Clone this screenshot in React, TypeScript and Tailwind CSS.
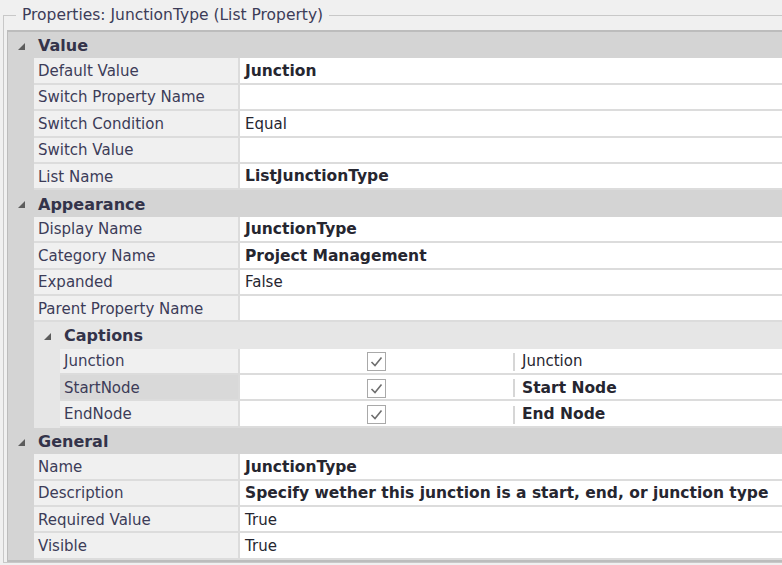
import React from "react";

type Item = { name: string; value: string; bold?: boolean };

const valueItems: Item[] = [
  { name: "Default Value", value: "Junction", bold: true },
  { name: "Switch Property Name", value: "" },
  { name: "Switch Condition", value: "Equal" },
  { name: "Switch Value", value: "" },
  { name: "List Name", value: "ListJunctionType", bold: true },
];

const appearanceItems: Item[] = [
  { name: "Display Name", value: "JunctionType", bold: true },
  { name: "Category Name", value: "Project Management", bold: true },
  { name: "Expanded", value: "False" },
  { name: "Parent Property Name", value: "" },
];

const captions = [
  { name: "Junction", caption: "Junction", bold: false },
  { name: "StartNode", caption: "Start Node", bold: true, selected: true },
  { name: "EndNode", caption: "End Node", bold: true },
];

const generalItems: Item[] = [
  { name: "Name", value: "JunctionType", bold: true },
  {
    name: "Description",
    value: "Specify wether this junction is a start, end, or junction type",
    bold: true,
  },
  { name: "Required Value", value: "True" },
  { name: "Visible", value: "True" },
];

const Arrow = () => (
  <svg width="7" height="7" viewBox="0 0 7 7">
    <polygon points="7,0 7,7 0,7" fill="#5c5c5c" />
  </svg>
);

const Check = () => (
  <div className="w-[19px] h-[19px] mt-[2px] border border-[#a9a9a9] bg-white flex items-center justify-center">
    <svg width="15" height="15" viewBox="0 0 15 15">
      <path d="M2.5 8 L6 11.5 L12.5 3.5" fill="none" stroke="#6e6e6e" strokeWidth="1.6" />
    </svg>
  </div>
);

const Category = ({ title }: { title: string }) => (
  <div className="flex h-[26.4px] bg-[#d4d4d4]">
    <div className="w-[26px] flex items-center justify-center pt-[2px]">
      <Arrow />
    </div>
    <div className="pl-[4px] pt-[2px] flex items-center font-bold text-[16px] text-[#33334a]">{title}</div>
  </div>
);

const Gutter = () => <div className="w-[26px] shrink-0 bg-[#d4d4d4]" />;

const PropRow = ({ item }: { item: Item }) => (
  <div className="flex h-[26.4px]">
    <Gutter />
    <div className="flex flex-1 border-b-2 border-[#dcdcdc]">
      <div className="w-[206px] shrink-0 bg-[#f0f0f0] border-r-2 border-[#dcdcdc] pl-[4px] pt-[2px] flex items-center text-[#3c3c58]">
        {item.name}
      </div>
      <div
        className={
          "flex-1 bg-white pl-[5px] pt-[2px] flex items-center whitespace-nowrap text-[#262630] " +
          (item.bold ? "font-bold text-[15.5px]" : "")
        }
      >
        {item.value}
      </div>
    </div>
  </div>
);

export default function App() {
  return (
    <div
      className="w-[782px] h-[565px] overflow-hidden bg-[#f0f0f0] text-[15px] leading-none"
      style={{ fontFamily: '"DejaVu Sans", Tahoma, sans-serif' }}
    >
      <fieldset className="ml-[3px] mt-[6px] w-[800px] border border-[#c8c8c8] pl-[3px] pt-[5px]">
        <legend className="ml-[9px] px-[6px] text-[15.5px] leading-[19px] text-[#3c3c58]">
          Properties: JunctionType (List Property)
        </legend>
        <div className="w-[790px] border-l border-t-2 border-b-2 border-[#bcbcbc]">
          <Category title="Value" />
          {valueItems.map((it) => (
            <PropRow key={it.name} item={it} />
          ))}
          <Category title="Appearance" />
          {appearanceItems.map((it) => (
            <PropRow key={it.name} item={it} />
          ))}
          {/* nested Captions category */}
          <div className="flex h-[26.4px]">
            <Gutter />
            <div className="flex flex-1 bg-[#e6e6e6]">
              <div className="w-[26px] flex items-center justify-center pt-[2px]">
                <Arrow />
              </div>
              <div className="pl-[4px] pt-[2px] flex items-center font-bold text-[16px] text-[#33334a]">
                Captions
              </div>
            </div>
          </div>
          {captions.map((c) => (
            <div key={c.name} className="flex h-[26.4px]">
              <Gutter />
              <div className="w-[26px] shrink-0 bg-[#e6e6e6]" />
              <div className="flex flex-1 border-b-2 border-[#dcdcdc]">
                <div
                  className={
                    "w-[180px] shrink-0 border-r-2 border-[#dcdcdc] pl-[4px] pt-[2px] flex items-center text-[#3c3c58] " +
                    (c.selected ? "bg-[#d9d9d9]" : "bg-[#f0f0f0]")
                  }
                >
                  {c.name}
                </div>
                <div className="flex-1 bg-white flex items-center">
                  <div className="w-[273px] flex justify-center">
                    <Check />
                  </div>
                  <div className="w-[2px] h-[18px] mt-[2px] bg-[#d6d6d6]" />
                  <div
                    className={
                      "pl-[7px] pt-[2px] text-[#262630] whitespace-nowrap " +
                      (c.bold ? "font-bold text-[15.5px]" : "")
                    }
                  >
                    {c.caption}
                  </div>
                </div>
              </div>
            </div>
          ))}
          <Category title="General" />
          {generalItems.map((it) => (
            <PropRow key={it.name} item={it} />
          ))}
        </div>
      </fieldset>
    </div>
  );
}
